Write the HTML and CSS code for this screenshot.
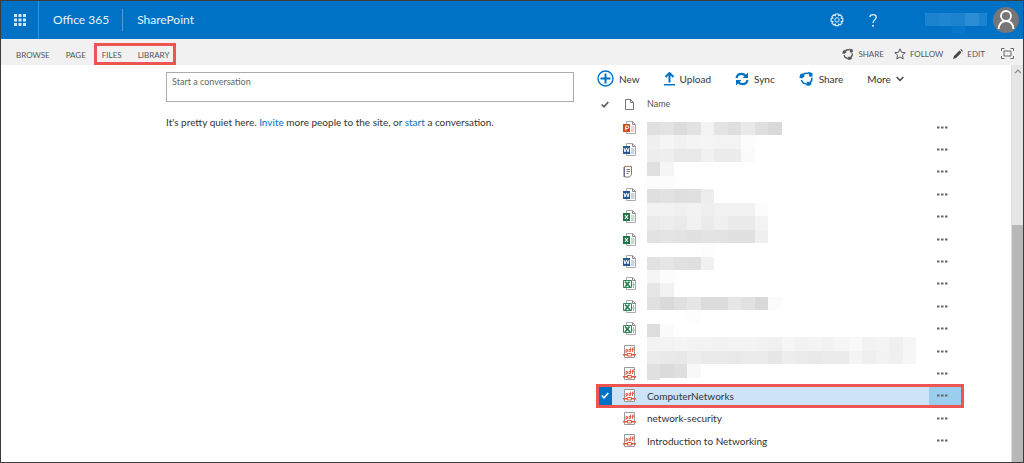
FILE: index.html
```html
<!DOCTYPE html>
<html lang="en">
<head>
<meta charset="utf-8">
<title>SharePoint</title>
<link rel="stylesheet" href="styles.css">
</head>
<body>
<svg class="defs" aria-hidden="true">
  <symbol id="share" viewBox="0 0 16 16"><g fill="none" stroke="currentColor" stroke-width="1.700"><path d="M5 3.200A5.800 5.800 0 0 1 10 2.700"/><path d="M13.700 7a5.800 5.800 0 0 1-1.700 5.200"/><path d="M8 13.800A5.800 5.800 0 0 1 2.600 9.500"/></g><path fill="currentColor" d="M9.500.800l4.800 1.200.2 3.800-3.300.4zM.3 7.500L1.500 3.200 5 2.500l1 3.300-2.500 2zM7.500 15.500l1-4 4 .3 1 2.200-2.500 1.800z"/></symbol>
  <symbol id="office" viewBox="0 0 13 13"><path d="M3.500.500h6l3 3v9h-9z" fill="#fff" stroke="#aaa"/><path d="M9.500.500v3h3" fill="none" stroke="#888"/><path d="M8 6h3.500M8 8h3.500M8 10h3.500" stroke="currentColor" opacity=".5"/><path d="M0 3h7v8H0z" fill="currentColor"/></symbol>
  <symbol id="ppt" viewBox="0 0 13 13"><use href="#office"/><path d="M2.700 9.500V5h1.800a1.200 1.200 0 0 1 0 2.500H2.700" fill="none" stroke="#fff"/></symbol>
  <symbol id="word" viewBox="0 0 13 13"><use href="#office"/><path d="M1 5l1 4 1.500-4 1.500 4 1-4" fill="none" stroke="#fff"/></symbol>
  <symbol id="excel" viewBox="0 0 13 13"><use href="#office"/><path d="M2 5l3 4M5 5l-3 4" stroke="#fff" stroke-width="1.200"/></symbol>
  <symbol id="sheet" viewBox="0 0 13 13"><path d="M3.500.500h6l3 3v9h-9z" fill="#fff" stroke="#aaa"/><path d="M9.500.500v3h3" fill="none" stroke="#888"/><path d="M10.500 5v6M9 8h3" stroke="#95c9aa"/><path d="M.5 3.500h8v7h-8z" fill="#fff" stroke="#31885a"/><path d="M2 4.500l5 5.500M6.500 4.500L2 10" stroke="#218052" stroke-width="1.700"/></symbol>
  <symbol id="note" viewBox="0 0 13 13"><path d="M1.500 1.500h7v8l-2 2.500h-5z" fill="#fff" stroke="#777"/><path d="M1 2v10" stroke="#655cad"/><path d="M1 1.300h8" stroke="#d7a24a" stroke-dasharray="1 .7"/><path d="M3.500 4.500h3.500M3.500 6.500h3.500M3.500 8.500h2" stroke="#778"/></symbol>
  <symbol id="pdf" viewBox="0 0 13 13"><path d="M1.500.500h10v12h-10z" fill="#fff" stroke="#999"/><path d="M3 8V4.500h1.500V6.500H3M7.500 2.500v4H6v-2h1.500M9.500 7V3H11M8.500 4.500H11" fill="none" stroke="#e8654f"/><path d="M0 9.700h4.500M8.500 9.700H13" stroke="#e3563e" stroke-width="1.500"/><path d="M4.500 8.500h4v2.500h-4z" fill="#fff" stroke="#e3563e"/></symbol>
  <symbol id="dots" viewBox="0 0 11 3"><path d="M0 .500h2.500v2H0zM4 .500h2.500v2H4zM8 .500h2.500v2H8z" fill="#666"/></symbol>
</svg>

<header class="suite">
  <button class="waffle" aria-label="Apps"><svg width="12" height="12" viewBox="0 0 12 12"><path d="M0 0h3v3H0zM4.500 0h3v3h-3zM9 0h3v3H9zM0 4.500h3v3H0zM4.500 4.500h3v3h-3zM9 4.500h3v3H9zM0 9h3v3H0zM4.500 9h3v3h-3zM9 9h3v3H9z" fill="#d6e9f7"/></svg></button>
  <a class="brand" href="#">Office 365</a>
  <a class="brand brand-app" href="#">SharePoint</a>
  <div class="suite-tools">
    <button class="tool" aria-label="Settings"><svg width="14" height="14" viewBox="0 0 14 14" fill="none" stroke="#d9ebf8"><path d="M5.700 1h2.600l.4 1.600 1.400-.8 1.900 1.900-.8 1.400 1.600.4v2.700l-1.600.4.8 1.500-1.900 1.800-1.400-.8-.4 1.600H5.700l-.4-1.600-1.500.8L2 10.100l.8-1.500-1.600-.4V5.500l1.600-.4L2 3.700l1.800-1.900 1.500.8z" stroke-width="1.200"/><circle cx="7" cy="6.900" r="2.200"/></svg></button>
    <button class="tool help" aria-label="Help"><svg width="8" height="13" viewBox="0 0 8 13"><path d="M.8 3.200C1 1.500 2.200.700 4 .700c1.900 0 3.200 1 3.200 2.600C7.200 5.800 4 6 4 9" fill="none" stroke="#e2f0fa" stroke-width="1.300"/><circle cx="4" cy="11.700" r="1" fill="#e2f0fa"/></svg></button>
    <svg class="mask-user" width="62" height="22" viewBox="0 0 62 22" aria-hidden="true"><path d="M0 0h62v13H0z" fill="#1b83d0"/><path d="M14 0h12v13H14z" fill="#2186d2"/><path d="M40 0h14v13H40z" fill="#2c8dd6"/><path d="M27 13h13v8H27z" fill="#0876c9"/></svg>
    <button class="avatar" aria-label="Account"><svg width="26" height="26" viewBox="0 0 26 26"><circle cx="13" cy="13" r="13" fill="#767676"/><g fill="none" stroke="#fff" stroke-width="1.800"><circle cx="13" cy="9" r="5"/><path d="M5.500 22c.5-5 3.200-8 7.500-8s7 3 7.500 8"/></g></svg></button>
  </div>
</header>

<nav class="ribbon">
  <a class="tab" href="#">BROWSE</a>
  <a class="tab" href="#">PAGE</a>
  <div class="tab-group"><a class="tab" href="#">FILES</a><a class="tab" href="#">LIBRARY</a></div>
  <div class="actions">
    <button class="action"><svg width="12" height="12"><use href="#share"/></svg>SHARE</button>
    <button class="action"><svg width="12" height="12" viewBox="0 0 12 12"><path d="M6 .900l1.500 3.400 3.700.400-2.800 2.500.8 3.700L6 9l-3.200 1.900.8-3.700L.800 4.700l3.700-.400z" fill="none" stroke="#555"/></svg>FOLLOW</button>
    <button class="action"><svg width="10" height="10" viewBox="0 0 10 10"><path d="M0 10l1-3 5.500-5.500 2 2L3 9zM7.200.800L8 0l2 2-.8.800z" fill="#444"/></svg>EDIT</button>
    <button class="action focus" aria-label="Focus on content"><svg width="13" height="11" viewBox="0 0 13 11" fill="none" stroke="#666"><path d="M.5 3V.500h3M9.500.500h3V3M12.500 8v2.500h-3M3.500 10.500h-3V8M3 3h7v5H3z"/></svg></button>
  </div>
</nav>

<div class="workspace">
  <main class="content">
    <section class="feed">
      <textarea class="post" aria-label="Start a conversation" placeholder="Start a conversation"></textarea>
      <p class="quiet">It's pretty quiet here. <a href="#">Invite</a> more people to the site, or <a href="#">start</a> a conversation.</p>
    </section>
    <section class="library">
      <div class="toolbar">
        <button class="command"><svg width="17" height="17" viewBox="0 0 17 17" fill="none" stroke="#0072c6"><circle cx="8.500" cy="8.500" r="7.500" stroke-width="1.400"/><path d="M8.500 3.500v10M3.500 8.500h10" stroke-width="2"/></svg>New</button>
        <button class="command upload"><svg width="11" height="14" viewBox="0 0 11 14"><path d="M5.500 1v9.500M1.500 5l4-4 4 4" fill="none" stroke="#0072c6" stroke-width="2"/><path d="M0 12h11v1.500H0z" fill="#0072c6"/></svg>Upload</button>
        <button class="command"><svg width="14" height="14" viewBox="0 0 14 14"><path d="M1.500 6C2 3 4 1.800 6.500 1.800c2 0 3 .8 4 2M12.500 8c-.5 3-2.500 4.200-5 4.200-2 0-3-.8-4-2" fill="none" stroke="#0072c6" stroke-width="2.200"/><path d="M13 .5V6H7.500zM1 13.500V8h5.500z" fill="#0072c6"/></svg>Sync</button>
        <button class="command"><svg width="15" height="15"><use href="#share"/></svg>Share</button>
        <button class="command more">More<svg width="8" height="6" viewBox="0 0 8 6"><path d="M.7 1L4 4.500 7.300 1" fill="none" stroke="#444" stroke-width="1.500"/></svg></button>
      </div>
      <div class="list">
        <table class="files">
          <thead><tr><th class="pick"><label class="check"><input type="checkbox" aria-label="Select all"><svg width="8" height="7" viewBox="0 0 8 7"><path d="M.7 3.500L3 5.800 7.300 1" fill="none" stroke="currentColor" stroke-width="1.500"/></svg></label></th><th class="kind"><svg width="9" height="11" viewBox="0 0 9 11" fill="none" stroke="#777"><path d="M.5.500h5l3 3v7h-8zM5.500.500v3h3"/></svg></th><th class="name">Name</th><th class="menu"></th></tr></thead>
          <tbody>
            <tr><td></td><td class="kind red"><svg><use href="#ppt"/></svg></td><td></td><td class="menu"><button aria-label="Open menu"><svg><use href="#dots"/></svg></button></td></tr>
            <tr><td></td><td class="kind blue"><svg><use href="#word"/></svg></td><td></td><td class="menu"><button aria-label="Open menu"><svg><use href="#dots"/></svg></button></td></tr>
            <tr><td></td><td class="kind"><svg><use href="#note"/></svg></td><td></td><td class="menu"><button aria-label="Open menu"><svg><use href="#dots"/></svg></button></td></tr>
            <tr><td></td><td class="kind blue"><svg><use href="#word"/></svg></td><td></td><td class="menu"><button aria-label="Open menu"><svg><use href="#dots"/></svg></button></td></tr>
            <tr><td></td><td class="kind green"><svg><use href="#excel"/></svg></td><td></td><td class="menu"><button aria-label="Open menu"><svg><use href="#dots"/></svg></button></td></tr>
            <tr><td></td><td class="kind green"><svg><use href="#excel"/></svg></td><td></td><td class="menu"><button aria-label="Open menu"><svg><use href="#dots"/></svg></button></td></tr>
            <tr><td></td><td class="kind blue"><svg><use href="#word"/></svg></td><td></td><td class="menu"><button aria-label="Open menu"><svg><use href="#dots"/></svg></button></td></tr>
            <tr><td></td><td class="kind"><svg><use href="#sheet"/></svg></td><td></td><td class="menu"><button aria-label="Open menu"><svg><use href="#dots"/></svg></button></td></tr>
            <tr><td></td><td class="kind"><svg><use href="#sheet"/></svg></td><td></td><td class="menu"><button aria-label="Open menu"><svg><use href="#dots"/></svg></button></td></tr>
            <tr><td></td><td class="kind"><svg><use href="#sheet"/></svg></td><td></td><td class="menu"><button aria-label="Open menu"><svg><use href="#dots"/></svg></button></td></tr>
            <tr><td></td><td class="kind"><svg><use href="#pdf"/></svg></td><td></td><td class="menu"><button aria-label="Open menu"><svg><use href="#dots"/></svg></button></td></tr>
            <tr><td></td><td class="kind"><svg><use href="#pdf"/></svg></td><td></td><td class="menu"><button aria-label="Open menu"><svg><use href="#dots"/></svg></button></td></tr>
            <tr class="selected"><td class="pick"><label class="check"><input type="checkbox" checked aria-label="Select ComputerNetworks"><svg width="8" height="7" viewBox="0 0 8 7"><path d="M.7 3.500L3 5.800 7.300 1" fill="none" stroke="currentColor" stroke-width="1.500"/></svg></label></td><td class="kind"><svg><use href="#pdf"/></svg></td><td>ComputerNetworks</td><td class="menu"><button aria-label="Open menu"><svg><use href="#dots"/></svg></button></td></tr>
            <tr><td></td><td class="kind"><svg><use href="#pdf"/></svg></td><td>network-security</td><td class="menu"><button aria-label="Open menu"><svg><use href="#dots"/></svg></button></td></tr>
            <tr><td></td><td class="kind"><svg><use href="#pdf"/></svg></td><td>Introduction to Networking</td><td class="menu"><button aria-label="Open menu"><svg><use href="#dots"/></svg></button></td></tr>
          </tbody>
        </table>
        <svg class="mask" id="mask" viewBox="0 0 20 20" shape-rendering="crispEdges" aria-hidden="true"></svg>
      </div>
    </section>
  </main>
  <div class="scroll" aria-hidden="true">
    <svg width="8" height="5" viewBox="0 0 8 5"><path d="M1 4.200l3-3 3 3" fill="none" stroke="#888" stroke-width="1.200"/></svg>
    <div class="thumb"></div>
  </div>
</div>
<script src="mask.js"></script>
</body>
</html>
```
FILE: styles.css
```css
* { box-sizing: border-box; }
body {
  margin: 0;
  height: 100vh;
  display: flex;
  flex-direction: column;
  overflow: hidden;
  border: 1px solid #3c3c3c;
  background: #fff;
  color: #333;
  font: 10px/16px Lato, "Open Sans", sans-serif;
}
button { border: 0; padding: 0; background: none; color: inherit; font: inherit; }
a { color: #0072c6; text-decoration: none; }
svg { display: block; flex: none; }
.defs { position: absolute; width: 0; height: 0; }

.suite { display: flex; align-items: center; height: 38px; flex: none; background: #0072c6; }
.waffle { display: flex; align-items: center; justify-content: center; width: 38px; height: 38px; border-right: 1px solid #3c94d6; }
.brand { padding: 0 13px 0 14px; color: #e8f3fb; font-size: 12px; line-height: 22px; }
.brand-app { border-left: 1px solid #4d9dd8; }
.suite-tools { display: flex; align-items: center; margin-left: auto; padding-right: 4px; }
.help { margin-left: 25px; }
.mask-user { margin: 8px 6px 0 48px; }

.ribbon { display: flex; align-items: center; height: 26px; flex: none; padding: 4px 9px 0 7px; background: #f1f1f1; color: #555; font-size: 8px; line-height: 14px; }
.tab { padding: 2px 8px 0; color: #555; }
.tab-group { display: flex; border: 3px solid #ec5552; }
.tab-group .tab { padding: 2px 11px 0 5px; }
.tab-group .tab:last-child { padding-right: 4px; }
.actions { display: flex; align-items: center; gap: 10px; margin-left: auto; padding-bottom: 1px; }
.action { display: flex; align-items: center; gap: 4px; }
.focus { margin-left: 6px; }

.workspace { display: flex; flex: 1; min-height: 0; }
.content { display: grid; grid-template-columns: minmax(0, 408fr) minmax(0, 366fr); gap: 23px; flex: 1; min-width: 0; padding: 0 48px 0 165px; }
.feed { padding-top: 7px; }
.post { display: block; width: 100%; height: 30px; padding: 1px 5px; resize: none; border: 1px solid #ababab; color: #555; font: 9px/16px Lato, "Open Sans", sans-serif; }
.post::placeholder { color: #666; }
.quiet { margin: 12px 0 0; }

.toolbar { display: flex; align-items: center; gap: 24px; height: 27px; }
.command { display: flex; align-items: center; gap: 5px; }
.command svg { color: #0072c6; }
.list { position: relative; }
.files { width: 100%; height: 360px; border-collapse: collapse; table-layout: fixed; }
.files tr { height: 22px; }
.files th { height: 24px; padding: 0; font-size: 9px; font-weight: 400; text-align: left; color: #555; }
.files td { padding: 0; line-height: 16px; }
.files .pick { width: 15px; }
.files .kind { width: 35px; padding-left: 11px; }
.files th.kind { padding-left: 13px; }
.files td.kind svg { width: 13px; height: 13px; }
.files .menu { width: 34px; }
.menu button { display: block; margin-left: 8px; }
.menu svg { width: 11px; height: 3px; }
.check { display: flex; align-items: center; justify-content: center; }
.check input { appearance: none; width: 0; height: 0; margin: 0; }
.red { color: #d24726; }
.blue { color: #2b579a; }
.green { color: #217346; }
.selected { background: #cde4f8; outline: 3px solid #ec5552; outline-offset: -2px; }
.selected .pick { background: #0072c6; color: #fff; }
.selected .menu { background: #9bcdef; }
.mask { position: absolute; left: 50px; top: 30px; width: 269px; height: 269px; }

.scroll { display: flex; flex-direction: column; width: 12px; flex: none; background: #e6e6e6; border-left: 1px solid #dcdcdc; }
.scroll svg { margin: 4px 2px 0; }
.thumb { flex: 1; margin-top: 151px; background: #b8b8b8; }
```
FILE: mask.js
```js
// Grey level of each tile, one string per tile row, two hex digits per tile.
const rows = [
  "e0e3dce2f3e4dfe9e0d9", "f0f5f1f4f5f3f3fc", "edeee8e8f1ebecfa", "e0f5", "fcfc",
  "dfe2dfe0ed", "f2f2f0f2eff2f2f2fc", "eaedeaf1ebf0eaeaf3", "e2e4e3e1e3e3e1e1ef",
  "fffffffffd", "e2e6e1e0f1", "f5fc", "e6f2", "e0d9e0e6dcdce6e1d9fb", "fffffffd", "ddfb",
  "f3f3f5f3f3f2f3f3f2f0f6f2f4f2f6f9f2f4eff6", "ebe9e8edeaeae8ebebe6edebe9ebebf4eff2f0f7",
  "e0dbdff8", "e0"
];
const mask = document.getElementById("mask");
rows.forEach((row, y) => {
  row.match(/../g).forEach((tone, x) => {
    if (tone === "ff") return;
    const tile = document.createElementNS("http://www.w3.org/2000/svg", "rect");
    tile.setAttribute("x", x);
    tile.setAttribute("y", y);
    tile.setAttribute("width", 1);
    // The last row is only a sliver.
    tile.setAttribute("height", y === rows.length - 1 ? 0.2 : 1);
    tile.setAttribute("fill", "#" + tone.repeat(3));
    mask.append(tile);
  });
});
```
